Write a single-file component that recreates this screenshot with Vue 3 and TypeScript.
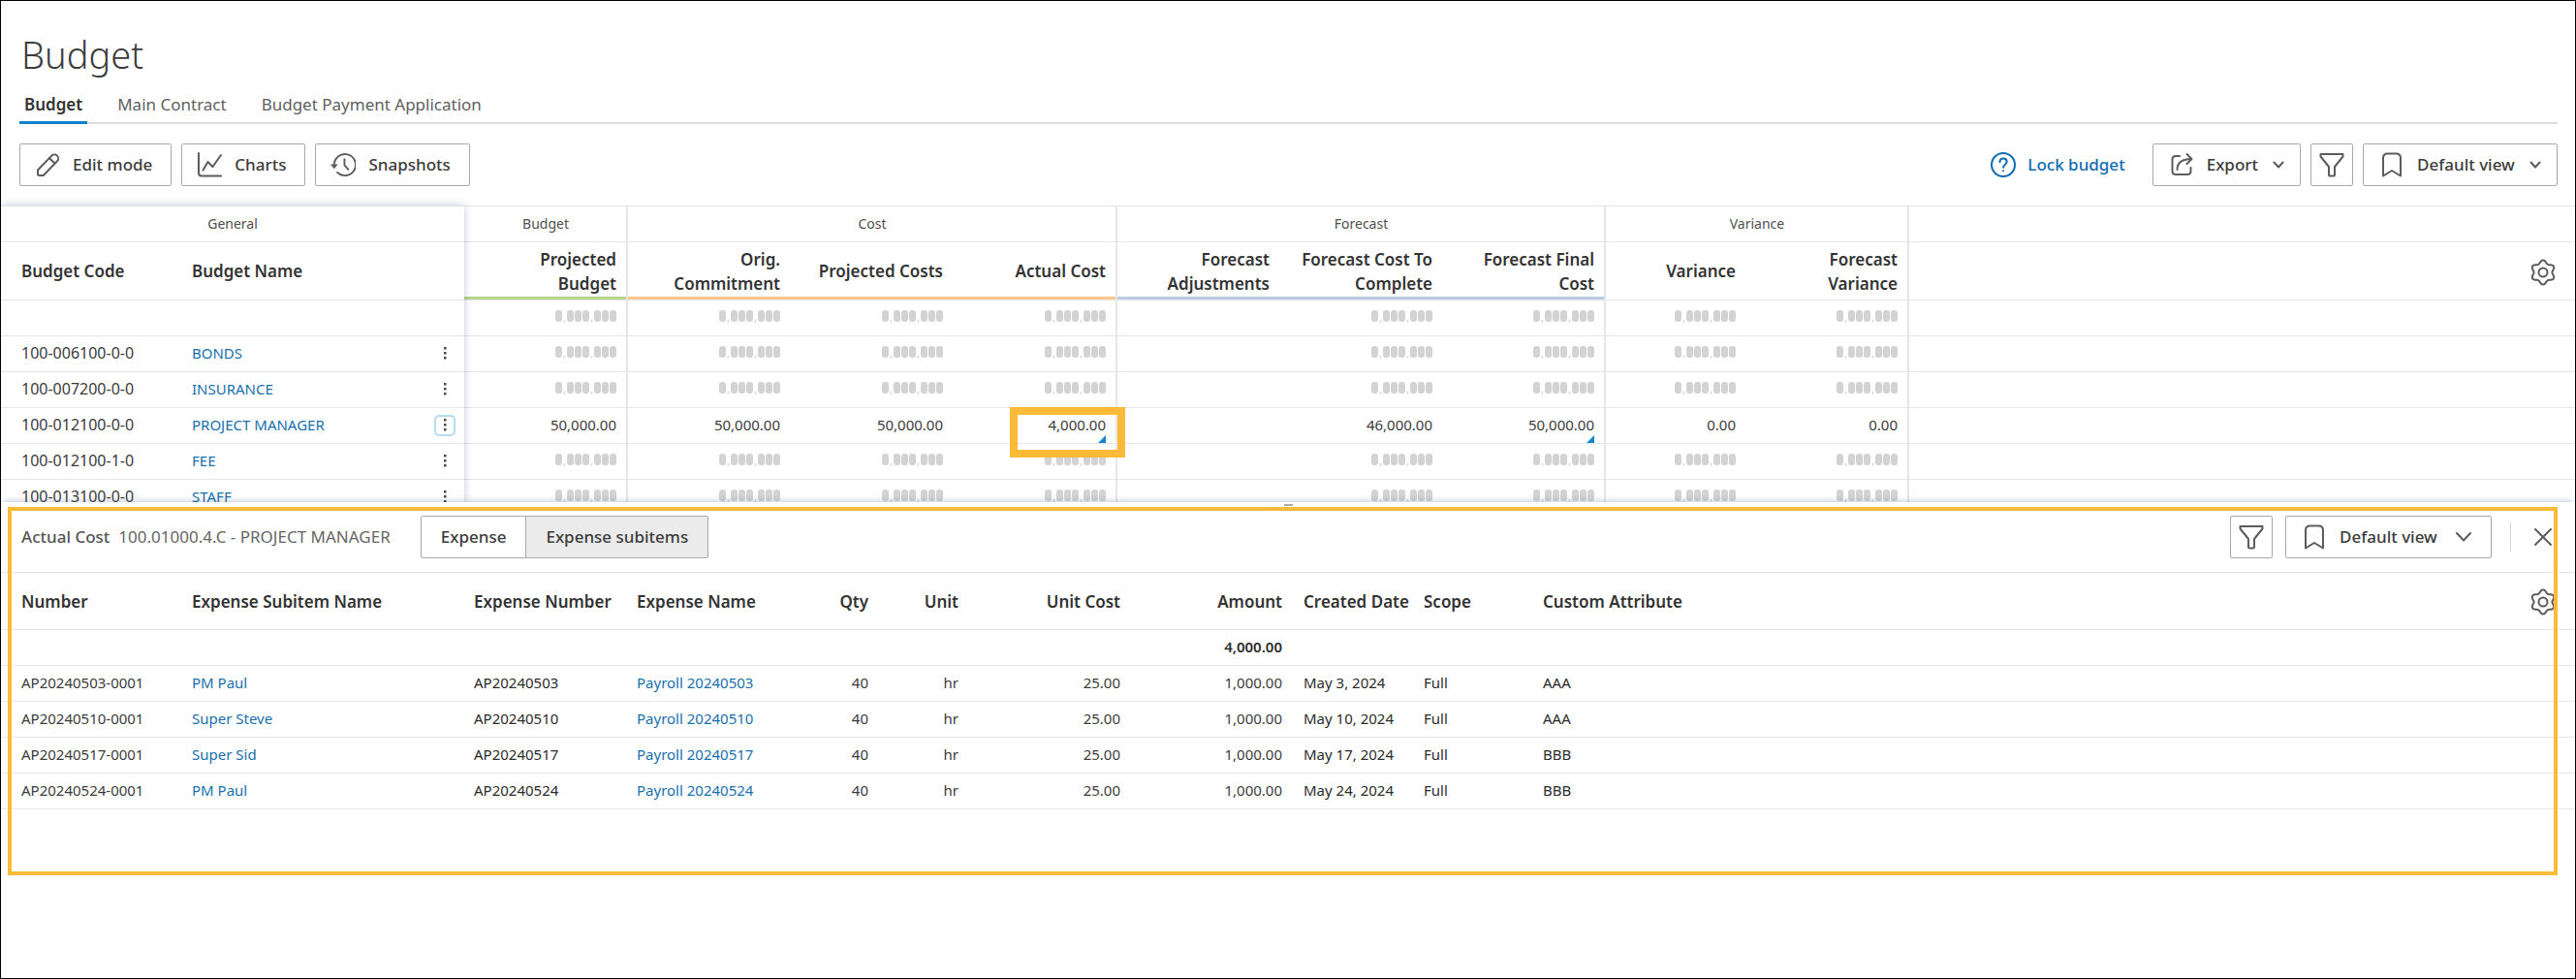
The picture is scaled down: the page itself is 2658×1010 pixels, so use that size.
<script setup lang="ts">
import { ref } from 'vue'

interface BudgetRow {
  code: string
  name: string
  values: string[]
  active?: boolean
}
interface ExpenseRow {
  number: string
  name: string
  expense: string
  payroll: string
  date: string
  attribute: string
}
interface Column {
  label: string
  tone: string
  last?: boolean
}

const MASK = '0,000,000'
const masked = [MASK, MASK, MASK, MASK, '', MASK, MASK, MASK, MASK]

const tabs = ['Budget', 'Main Contract', 'Budget Payment Application']
const activeTab = ref('Budget')
const detail = ref('Expense subitems')
const view = ref('Default view')
const detailView = ref('Default view')

const groups = [
  { label: 'Budget', span: 1 },
  { label: 'Cost', span: 3 },
  { label: 'Forecast', span: 3 },
  { label: 'Variance', span: 2 },
]
const columns: Column[] = [
  { label: 'Projected\nBudget', tone: 'green', last: true },
  { label: 'Orig.\nCommitment', tone: 'orange' },
  { label: 'Projected Costs', tone: 'orange' },
  { label: 'Actual Cost', tone: 'orange', last: true },
  { label: 'Forecast\nAdjustments', tone: 'blue' },
  { label: 'Forecast Cost To\nComplete', tone: 'blue' },
  { label: 'Forecast Final\nCost', tone: 'blue', last: true },
  { label: 'Variance', tone: 'none' },
  { label: 'Forecast\nVariance', tone: 'none', last: true },
]
const rows: BudgetRow[] = [
  { code: '', name: '', values: masked },
  { code: '100-006100-0-0', name: 'BONDS', values: masked },
  { code: '100-007200-0-0', name: 'INSURANCE', values: masked },
  {
    code: '100-012100-0-0',
    name: 'PROJECT MANAGER',
    active: true,
    values: ['50,000.00', '50,000.00', '50,000.00', '4,000.00', '', '46,000.00', '50,000.00', '0.00', '0.00'],
  },
  { code: '100-012100-1-0', name: 'FEE', values: masked },
  { code: '100-013100-0-0', name: 'STAFF', values: masked },
]
const expenses: ExpenseRow[] = [
  { number: 'AP20240503-0001', name: 'PM Paul', expense: 'AP20240503', payroll: 'Payroll 20240503', date: 'May 3, 2024', attribute: 'AAA' },
  { number: 'AP20240510-0001', name: 'Super Steve', expense: 'AP20240510', payroll: 'Payroll 20240510', date: 'May 10, 2024', attribute: 'AAA' },
  { number: 'AP20240517-0001', name: 'Super Sid', expense: 'AP20240517', payroll: 'Payroll 20240517', date: 'May 17, 2024', attribute: 'BBB' },
  { number: 'AP20240524-0001', name: 'PM Paul', expense: 'AP20240524', payroll: 'Payroll 20240524', date: 'May 24, 2024', attribute: 'BBB' },
]

// Outline of the settings gear: a circle with six soft teeth.
const GEAR =
  'M' +
  Array.from({ length: 72 }, (_, i) => {
    const t = (i * Math.PI) / 36
    const r = 11 + 1.6 * Math.cos(6 * t)
    return `${(14 + r * Math.sin(t)).toFixed(2)} ${(15 - r * Math.cos(t)).toFixed(2)}`
  }).join('L') +
  'z'
</script>

<template>
  <div class="page">
    <header class="head">
      <h1>Budget</h1>
      <nav class="tabs">
        <a
          v-for="tab in tabs"
          :key="tab"
          href="#"
          class="tab"
          :class="{ on: tab === activeTab }"
          @click.prevent="activeTab = tab"
        >{{ tab }}</a>
      </nav>
      <div class="toolbar">
        <div class="tools">
          <button class="btn" type="button">
            <svg class="icon" viewBox="0 0 26 26">
              <path d="M3 22.500V18.500L17.300 3.600a4 4 0 0 1 5.700 5.700L8.700 24H4.500Q3 24 3 22.500z" />
              <path d="M15 6.200l5.500 5.300" />
            </svg>
            Edit mode
          </button>
          <button class="btn" type="button">
            <svg class="icon" viewBox="0 0 26 26">
              <path d="M2 1v20.500q0 3 3 3h20" />
              <path d="M6.500 18.500l5-8.500 5 5L25 3" />
            </svg>
            Charts
          </button>
          <button class="btn" type="button">
            <svg class="icon" viewBox="0 0 27 26">
              <path d="M4 13.500V13a11.500 11.500 0 1 1 3.400 8.200" />
              <path d="M15 7v6.500l4 4.500" />
              <path class="solid" d="M0 12.500h8l-4 5z" />
            </svg>
            Snapshots
          </button>
        </div>
        <div class="tools">
          <a class="lock" href="#">
            <svg class="icon" viewBox="0 0 26 26">
              <circle cx="13" cy="13" r="12" />
              <path d="M9.500 10.200c0-2.300 1.500-3.700 3.600-3.700s3.600 1.400 3.600 3.300c0 2.900-3.600 3-3.600 6" />
              <circle class="solid" cx="13" cy="19.300" r="1" />
            </svg>
            Lock budget
          </a>
          <button class="btn menu" type="button" aria-haspopup="menu">
            <svg class="icon" viewBox="0 0 26 26">
              <path d="M11 4H7Q3.500 4 3.500 7.500v12Q3.500 23 7 23h12q3.500 0 3.500-3.500V16" />
              <path d="M8.500 18c0-7 4-11 15-11M18.500 2l5 5-5 5" />
            </svg>
            Export
            <svg class="chev" viewBox="0 0 16 16"><path d="M3.500 5.500L8 10.500l4.500-5" /></svg>
          </button>
          <button class="btn square" type="button" aria-label="Filter">
            <svg class="icon" viewBox="0 0 26 26"><path d="M1.500 2h23v2.500L16 15v8.500q0 1-1 1h-4q-1 0-1-1V15L1.500 4.500z" /></svg>
          </button>
          <label class="btn menu">
            <svg class="icon" viewBox="0 0 26 26"><path d="M4 24.500V6q0-4.500 4.500-4.500h9Q22 1.500 22 6v18.500L13 19z" /></svg>
            <select v-model="view" aria-label="View"><option>Default view</option></select>
            <svg class="chev" viewBox="0 0 16 16"><path d="M3.500 5.500L8 10.500l4.500-5" /></svg>
          </label>
        </div>
      </div>
    </header>

    <section class="pane">
      <div class="frozen">
        <table>
          <colgroup><col class="w186"><col><col class="w40"></colgroup>
          <thead>
            <tr class="groups"><th colspan="3">General</th></tr>
            <tr class="titles"><th>Budget Code</th><th>Budget Name</th><td></td></tr>
          </thead>
          <tbody>
            <tr v-for="row in rows" :key="row.code">
              <td class="code">{{ row.code }}</td>
              <td><a v-if="row.name" href="#">{{ row.name }}</a></td>
              <td class="more">
                <button v-if="row.code" type="button" aria-label="Row actions" :class="{ on: row.active }">
                  <svg viewBox="0 0 4 14"><rect width="2.500" height="2.500" x="1" y="0" /><rect width="2.500" height="2.500" x="1" y="5" /><rect width="2.500" height="2.500" x="1" y="10" /></svg>
                </button>
              </td>
            </tr>
          </tbody>
        </table>
      </div>
      <table class="scroll">
        <colgroup>
          <col class="w169"><col class="w168"><col class="w168"><col class="w169">
          <col class="w168"><col class="w168"><col class="w168">
          <col class="w145"><col class="w168"><col>
        </colgroup>
        <thead>
          <tr class="groups">
            <th v-for="group in groups" :key="group.label" :colspan="group.span" class="last">{{ group.label }}</th>
            <td></td>
          </tr>
          <tr class="titles">
            <th v-for="col in columns" :key="col.label" class="num" :class="[col.tone, { last: col.last }]">{{ col.label }}</th>
            <td class="gear">
              <button type="button" aria-label="Column settings">
                <svg viewBox="0 0 28 30"><path :d="GEAR" /><circle cx="14" cy="15" r="4.500" /></svg>
              </button>
            </td>
          </tr>
        </thead>
        <tbody>
          <tr v-for="row in rows" :key="row.code">
            <td v-for="(value, i) in row.values" :key="i" class="num" :class="{ last: columns[i].last }">
              <span v-if="value === MASK" class="mask"><span v-for="(ch, n) in value" :key="n" :class="ch === '0' ? 'zero' : 'comma'">{{ ch }}</span></span>
              <template v-else>{{ value }}</template>
              <i v-if="row.active && (i === 3 || i === 6)" class="corner"></i>
              <i v-if="row.active && i === 3" class="spot"></i>
            </td>
            <td></td>
          </tr>
        </tbody>
      </table>
    </section>

    <section class="drill">
      <div class="grip"></div>
      <div class="drillbar">
        <h2>Actual Cost</h2>
        <span class="path">100.01000.4.C - PROJECT MANAGER</span>
        <div class="segments">
          <button
            v-for="item in ['Expense', 'Expense subitems']"
            :key="item"
            type="button"
            :class="{ on: item === detail }"
            @click="detail = item"
          >{{ item }}</button>
        </div>
        <button class="btn square push" type="button" aria-label="Filter">
          <svg class="icon" viewBox="0 0 26 26"><path d="M1.500 2h23v2.500L16 15v8.500q0 1-1 1h-4q-1 0-1-1V15L1.500 4.500z" /></svg>
        </button>
        <label class="btn menu roomy">
          <svg class="icon" viewBox="0 0 26 26"><path d="M4 24.500V6q0-4.500 4.500-4.500h9Q22 1.500 22 6v18.500L13 19z" /></svg>
          <select v-model="detailView" aria-label="Detail view"><option>Default view</option></select>
          <svg class="chev" viewBox="0 0 16 16"><path d="M1 4l7 7.500L15 4" /></svg>
        </label>
        <span class="rule"></span>
        <button class="close" type="button" aria-label="Close">
          <svg viewBox="0 0 24 24"><path d="M4 4l16 16M20 4L4 20" /></svg>
        </button>
      </div>
      <table>
        <colgroup>
          <col class="w186"><col class="w291"><col class="w168"><col class="w168"><col class="w93"><col class="w93">
          <col class="w167"><col class="w167"><col class="w124"><col class="w123"><col><col class="w93">
        </colgroup>
        <thead>
          <tr class="titles short">
            <th>Number</th><th>Expense Subitem Name</th><th>Expense Number</th><th>Expense Name</th>
            <th class="num">Qty</th><th class="num">Unit</th><th class="num">Unit Cost</th><th class="num">Amount</th>
            <th>Created Date</th><th>Scope</th><th>Custom Attribute</th>
            <td class="gear">
              <button type="button" aria-label="Column settings">
                <svg viewBox="0 0 28 30"><path :d="GEAR" /><circle cx="14" cy="15" r="4.500" /></svg>
              </button>
            </td>
          </tr>
        </thead>
        <tbody>
          <tr><td colspan="7"></td><td class="num total">4,000.00</td><td colspan="4"></td></tr>
          <tr v-for="item in expenses" :key="item.number">
            <td>{{ item.number }}</td>
            <td><a href="#">{{ item.name }}</a></td>
            <td class="dark">{{ item.expense }}</td>
            <td><a href="#">{{ item.payroll }}</a></td>
            <td class="num">40</td>
            <td class="num">hr</td>
            <td class="num">25.00</td>
            <td class="num">1,000.00</td>
            <td class="dark">{{ item.date }}</td>
            <td class="dark">Full</td>
            <td class="dark">{{ item.attribute }}</td>
            <td></td>
          </tr>
        </tbody>
      </table>
      <div class="outline"></div>
    </section>
  </div>
</template>

<style>
body {
  background: #fff;
}
</style>

<style scoped>
* {
  box-sizing: border-box;
}
.page {
  min-height: 100vh;
  border: 1px solid #000;
  background: #fff;
  color: #3c3c3c;
  font-family: 'Noto Sans', 'Open Sans', sans-serif;
  font-size: 15px;
  line-height: 24px;
}
.head {
  padding: 31px 18px 10px 19px;
}
h1 {
  margin: 0 0 16px 2px;
  font-size: 38px;
  line-height: 48px;
  font-weight: 300;
}
.tabs {
  display: flex;
  gap: 26px;
  border-bottom: 2px solid #dcdcdc;
}
.tab {
  margin-bottom: -2px;
  padding: 0 5px 5px;
  border-bottom: 3px solid transparent;
  color: #5f5f5f;
  font-size: 17px;
  text-decoration: none;
}
.tab.on {
  border-color: #1380cb;
  color: #333;
  font-weight: 600;
}
.toolbar {
  display: flex;
  justify-content: space-between;
  margin-top: 20px;
}
.tools {
  display: flex;
  align-items: center;
  gap: 10px;
}
button,
select {
  font: inherit;
  color: inherit;
}
.btn {
  display: inline-flex;
  align-items: center;
  gap: 13px;
  height: 44px;
  padding: 0 19px 0 15px;
  border: 1px solid #a9a9a9;
  border-radius: 2px;
  background: #fff;
  color: #3c3c3c;
  font-size: 17px;
  font-weight: 500;
  white-space: nowrap;
}
.btn.menu {
  padding: 0 14px 0 16px;
}
.btn.roomy {
  padding-right: 20px;
}
.btn.roomy .chev {
  margin-left: 6px;
}
.btn.square {
  width: 44px;
  padding: 0;
  justify-content: center;
}
.icon {
  flex: none;
  width: 26px;
  height: 26px;
}
.chev {
  flex: none;
  width: 16px;
  height: 16px;
}
svg {
  display: block;
  fill: none;
  stroke: #5c5c5c;
  stroke-width: 2;
  stroke-linejoin: round;
  stroke-linecap: round;
}
.solid {
  fill: #5c5c5c;
  stroke: none;
}
select {
  appearance: none;
  padding: 0;
  border: 0;
  background: none;
}
.lock {
  display: flex;
  align-items: center;
  gap: 12px;
  margin-right: 18px;
  color: #0f6cb0;
  font-size: 17px;
  font-weight: 500;
  text-decoration: none;
}
.lock svg {
  stroke: #0f6cb0;
}
.lock .solid {
  fill: #0f6cb0;
}

.pane {
  display: flex;
  align-items: flex-start;
  height: 316px;
  padding-top: 10px;
  overflow: hidden;
}
.frozen {
  position: relative;
  z-index: 1;
  flex: none;
  width: 478px;
  background: #fff;
  box-shadow: 0 0 8px rgba(50, 70, 120, 0.3);
}
.scroll {
  flex: 1;
  min-width: 0;
}
table {
  width: 100%;
  border-spacing: 0;
  table-layout: fixed;
}
.pane table {
  border-top: 1px solid #e4e4e4;
}
.w40 { width: 40px; }
.w93 { width: 93px; }
.w123 { width: 123px; }
.w124 { width: 124px; }
.w145 { width: 145px; }
.w167 { width: 167px; }
.w168 { width: 168px; }
.w169 { width: 169px; }
.w186 { width: 186px; }
.w291 { width: 291px; }
th,
td {
  height: 37px;
  padding: 0 11px;
  border-bottom: 1px solid #e6e6e6;
  text-align: left;
  white-space: nowrap;
}
td {
  position: relative;
  padding-bottom: 3px;
}
.frozen tr:not(.groups) > :first-child,
.drill tr > :first-child {
  padding-left: 21px;
}
.groups th {
  color: #4f4f4f;
  font-size: 14px;
  font-weight: 400;
  text-align: center;
}
.titles th,
.titles td {
  height: 60px;
  color: #333;
  font-size: 17px;
  font-weight: 600;
  line-height: 25px;
  white-space: pre-line;
}
.titles.short th,
.titles.short td {
  height: 59px;
  white-space: nowrap;
}
.titles .num,
.num {
  text-align: right;
}
.last {
  padding-right: 10px;
  border-right: 2px solid #e6e6e6;
}
.green { box-shadow: inset 0 -3px #b8d58b; }
.orange { box-shadow: inset 0 -3px #fcc88d; }
.blue { box-shadow: inset 0 -3px #bccae4; }
.code {
  font-size: 16px;
}
td a {
  color: #1a70ad;
  text-decoration: none;
}
.dark {
  color: #2c2c2c;
}
.total {
  color: #2c2c2c;
  font-weight: 600;
}
.more {
  padding: 0;
}
.more button {
  display: flex;
  align-items: center;
  justify-content: center;
  width: 22px;
  height: 22px;
  margin: 0 auto;
  padding: 0;
  border: 1px solid transparent;
  border-radius: 5px;
  background: none;
}
.more button.on {
  border: 2px solid #b4ddf2;
}
.more svg {
  flex: none;
  width: 4px;
  height: 14px;
  fill: #4a4a4a;
  stroke: none;
}
.titles .gear {
  padding: 2px 19px 0 0;
}
.gear button {
  display: block;
  width: 28px;
  height: 30px;
  margin-left: auto;
  padding: 0;
  border: 0;
  background: none;
}
.mask {
  display: flex;
  justify-content: flex-end;
  gap: 1px;
  margin-bottom: 1px;
  color: #d3d3d3;
  font-size: 12px;
  line-height: 13px;
}
.zero {
  width: 7px;
  height: 12px;
  border-radius: 3px;
  background: #d3d3d3;
}
.comma {
  width: 3px;
}
.corner {
  position: absolute;
  right: 10px;
  bottom: 0;
  border-left: 8px solid transparent;
  border-bottom: 8px solid #1583cd;
}
.spot {
  position: absolute;
  z-index: 1;
  top: -1px;
  right: -10px;
  bottom: -15px;
  width: 119px;
  border: 8px solid #fbba37;
}

.drill {
  position: relative;
  z-index: 2;
  padding-bottom: 68px;
  background: #fff;
  box-shadow: 0 -4px 6px -3px rgba(50, 70, 120, 0.3);
}
.grip {
  position: absolute;
  top: 2px;
  left: 50%;
  width: 9px;
  height: 2px;
  margin-left: -4px;
  background: #aaa;
}
.drillbar {
  display: flex;
  align-items: center;
  padding: 14px 21px;
  border-bottom: 1px solid #e4e4e4;
  font-size: 17px;
}
h2 {
  margin: 0 9px 0 0;
  color: #555;
  font-size: 17px;
  font-weight: 500;
}
.path {
  color: #666;
}
.segments {
  display: flex;
  margin-left: 31px;
}
.segments button {
  height: 44px;
  padding: 0 20px;
  border: 1px solid #a9a9a9;
  border-radius: 2px 0 0 2px;
  background: #fff;
  font-weight: 500;
}
.segments button.on {
  margin-left: -1px;
  border-radius: 0 2px 2px 0;
  background: #ebebeb;
}
.push {
  margin: 0 13px 0 auto;
}
.rule {
  width: 1px;
  height: 30px;
  margin: 0 21px 0 19px;
  background: #d4d4d4;
}
.close {
  width: 24px;
  height: 24px;
  padding: 0;
  border: 0;
  background: none;
}
.outline {
  position: absolute;
  inset: 5px 18px 0 7px;
  border: 4px solid #fbba37;
  pointer-events: none;
}
</style>
